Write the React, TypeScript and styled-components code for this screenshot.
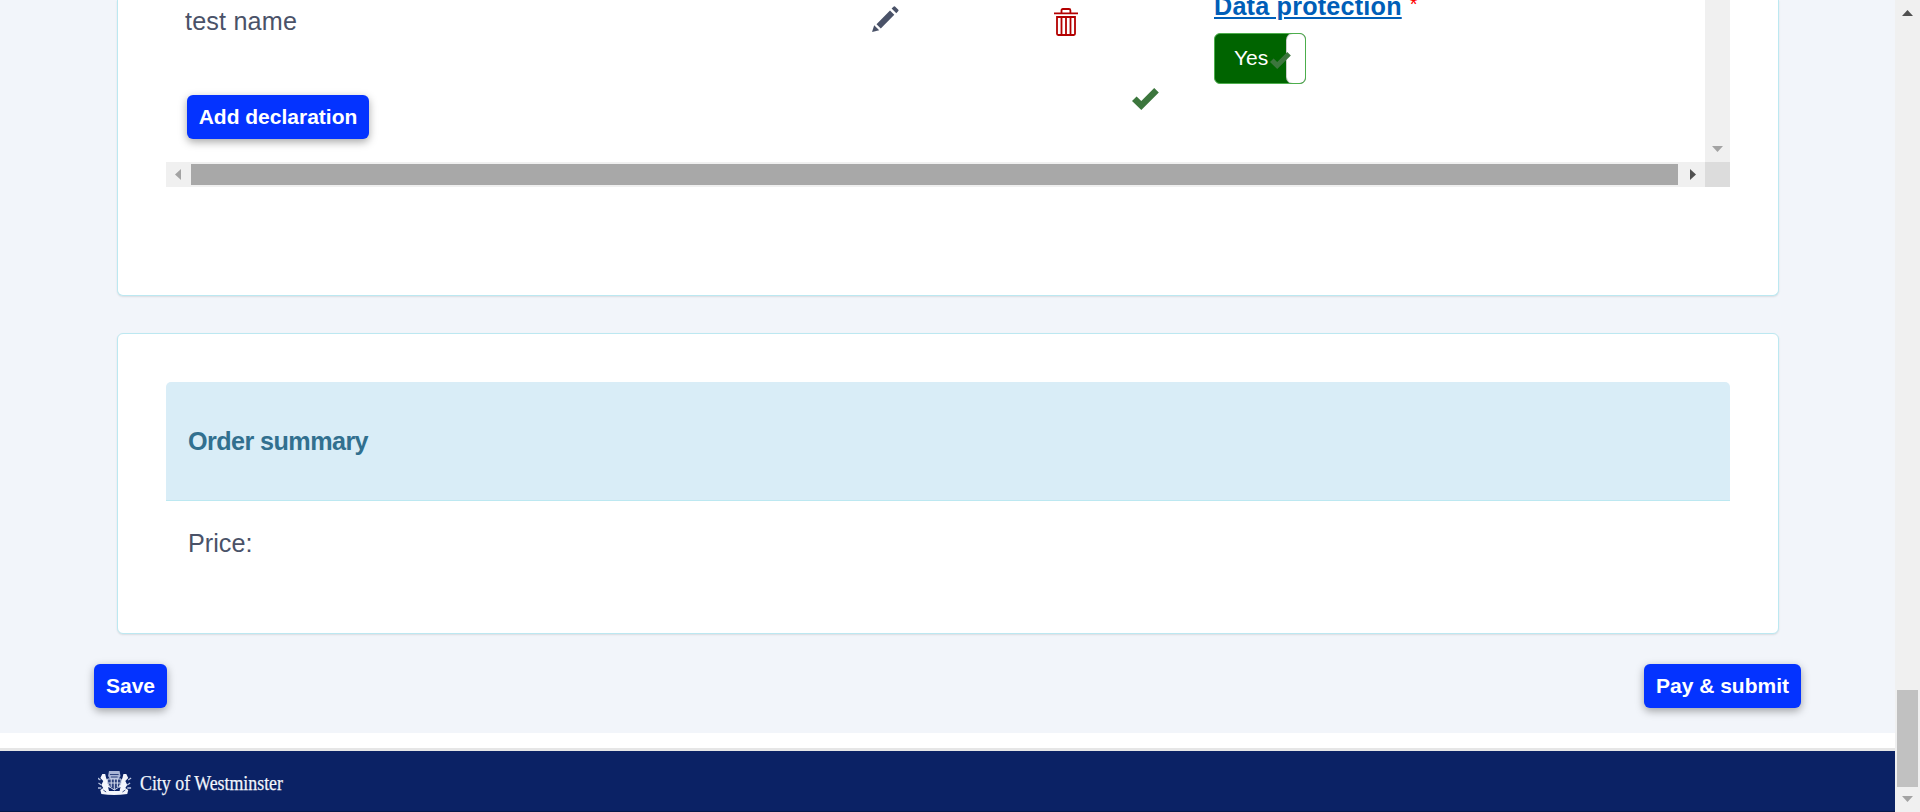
import React from "react";
import styled, { createGlobalStyle } from "styled-components";

const GlobalStyle = createGlobalStyle`
  * { box-sizing: border-box; }
  body {
    margin: 0;
    overflow: hidden;
    background: #fff;
    font-family: "Liberation Sans", Arial, sans-serif;
    font-size: 25.2px;
    color: #4a5268;
  }
  svg { display: block; flex: none; }
`;

const Window = styled.div`
  display: flex;
  height: 812px;
  overflow: hidden;
`;

const Page = styled.div`
  flex: 1;
  min-width: 0;
  display: flex;
  flex-direction: column;
`;

const Main = styled.main`
  height: 733px;
  padding: 0 94px 0 94px;
  background: #f2f5fa;
`;

const Card = styled.section<{ $height: number; $cut?: boolean }>`
  height: ${(p) => p.$height}px;
  margin: 0 22px 37px 23px;
  padding: ${(p) => (p.$cut ? 0 : 48)}px 48px 0;
  background: #fff;
  border: 1px solid #bce8f1;
  border-top-width: ${(p) => (p.$cut ? 0 : 1)}px;
  border-radius: ${(p) => (p.$cut ? "0 0 6px 6px" : "6px")};
  box-shadow: 0 1px 2px rgba(0, 0, 0, 0.1);
`;

const ScrollFrame = styled.div`
  display: grid;
  grid-template-columns: 1539px 25px;
  grid-template-rows: 162px 25px;
`;

const Declarations = styled.div`
  display: grid;
  grid-template-columns: 706px 182px 78px 82px 1fr;
  align-items: start;
  overflow: hidden;
`;

const Cell = styled.div<{ $top: number; $left?: number }>`
  padding: ${(p) => p.$top}px 0 0 ${(p) => p.$left ?? 0}px;
`;

const Name = styled.div`
  height: 88px;
  line-height: 28px;
  margin-left: -2px;
  letter-spacing: 0.17px;
`;

const Button = styled.button<{ $width: number }>`
  width: ${(p) => p.$width}px;
  height: 44px;
  padding: 0 0 1px;
  border: 0;
  border-radius: 6px;
  background: #0433ff;
  color: #fff;
  font: bold 21px "Liberation Sans", Arial, sans-serif;
  white-space: nowrap;
  box-shadow: 0 3px 8px rgba(0, 0, 0, 0.35);
`;

const Label = styled.div`
  display: flex;
  gap: 8px;
  height: 44px;
  margin-top: -11px;
  line-height: 34px;
  font-weight: bold;
  font-size: 25.2px;
`;

const HelpLink = styled.a`
  color: #005eb8;
  letter-spacing: 0.2px;
  text-decoration: underline;
  text-decoration-thickness: 2px;
  text-underline-offset: 2px;
`;

const Required = styled.span`
  color: #f00;
  font-size: 20px;
  font-weight: normal;
  line-height: 31px;
`;

const Toggle = styled.div`
  position: relative;
  display: flex;
  justify-content: space-between;
  width: 92px;
  height: 51px;
  border: 1px solid #4cae4c;
  border-radius: 6px;
  background: #006400;
  overflow: hidden;
`;

const ToggleText = styled.span`
  padding-left: 19px;
  color: #fff;
  font-size: 21px;
  line-height: 48px;
`;

const Knob = styled.span`
  width: 18px;
  border-radius: 6px;
  background: #fff;
  box-shadow: 0 0 0 1px #ccc;
`;

const ToggleMark = styled.span`
  position: absolute;
  left: 55px;
  top: 18px;
`;

const VTrack = styled.div`
  display: flex;
  flex-direction: column;
  align-items: center;
  background: #f0f0f0;
`;

const HTrack = styled.div`
  display: flex;
  align-items: center;
  background: #f0f0f0;
`;

const Corner = styled.div`
  background: #dcdcdc;
`;

const Arrow = styled.svg<{ $space: string }>`
  margin: ${(p) => p.$space};
`;

const HThumb = styled.div`
  width: 1487px;
  height: 21px;
  background: #a8a8a8;
`;

const WindowTrack = styled(VTrack)`
  flex: none;
  width: 25px;
  height: 812px;
`;

const WindowThumb = styled.div`
  width: 21px;
  height: 97px;
  margin-top: auto;
  background: #c1c1c1;
`;

const SummaryTitle = styled.h2`
  height: 119px;
  margin: 0;
  padding: 0 0 1px 22px;
  border-bottom: 1px solid #bce8f1;
  border-radius: 5px 5px 0 0;
  background: #d9edf7;
  color: #31708f;
  font-size: 25.2px;
  line-height: 118px;
  letter-spacing: -0.58px;
`;

const Price = styled.div`
  padding: 28px 22px 0;
  line-height: 29px;
`;

const Actions = styled.div`
  display: flex;
  justify-content: space-between;
  margin-top: -7px;
`;

const Footer = styled.footer`
  height: 64px;
  margin-top: 15px;
  padding: 15px 98px 0;
  border-top: 3px solid #e6e6e6;
  border-bottom: 1px solid #061a4a;
  background: #0b2265;
`;

const Pencil = () => (
  <svg width="27" height="26" viewBox="0 0 27 26" fill="#4a5268">
    <path d="M4.5 18.2 18 4.5 22.3 8.7 8.8 22.4ZM19.6 2.6 21.8.4Q22.4-.1 23 .4L26.3 3.8Q26.8 4.4 26.3 5L24.3 7.2ZM0 26 2.2 19.2 7.2 24.2Z" />
  </svg>
);

const Trash = () => (
  <svg width="24" height="28" viewBox="0 0 24 28" fill="none" stroke="#b30000" strokeWidth="1.8">
    <path d="M0 5.4H24M7.5 5V2.4Q7.5 1 8.9 1H15Q16.4 1 16.4 2.4V5M3 9H21V25.8Q21 27 19.8 27H4.2Q3 27 3 25.8ZM7.5 9V27M12 9V27M16.5 9V27" />
  </svg>
);

const Check = ({ width, height, fill }: { width: number; height: number; fill: string }) => (
  <svg width={width} height={height} viewBox="0 0 27 22" fill={fill} preserveAspectRatio="none">
    <path d="M0 13 4.6 8.5 9.3 13 22.2 0 26.8 4.6 9.3 22Z" />
  </svg>
);

const Crest = () => (
  <g fill="none" stroke="#eef2fb" strokeWidth="1.4">
    <path
      fill="#f4f6fc"
      stroke="none"
      d="M3 8 5 4 8 4 9 8 12 14 13 18 11 17 12 21H23L24 17 22 18 23 14 26 8 27 4 30 4 32 8 29 11 31 15 29 18 32 20 31 24Q17 26 4 24L3 20 6 18 4 15 6 11Z"
    />
    <path fill="#a9b5d6" stroke="none" d="M12 1H23L24 6 22 9H13L11 6Z" />
    <path d="M0 8 3 10M35 8 32 10M1 13 4 15M34 13 31 15M0 18H4M31 18H35" stroke="#b9c4e0" />
    <path d="M10.5 9H24.5V13Q23 18 17.5 20Q12 18 10.5 13Z" fill="#2a3f7c" stroke="#cfd7eb" strokeWidth="1" />
    <path d="M17.5 9V20M11 13H24M14.3 9V17M20.7 9V17" stroke="#d6ddef" strokeWidth="1" />
    <path d="M13 4.5H22M14 7H21M6 20 9 22M29 20 26 22" stroke="#0b2265" strokeWidth=".8" />
  </g>
);

const Brand = () => (
  <svg width="260" height="40" viewBox="0 0 260 40">
    <g transform="translate(-.5 4) scale(.96 1)">
      <Crest />
    </g>
    <text
      x="42"
      y="24"
      fill="#f2f5fc"
      stroke="#f2f5fc"
      strokeWidth=".25"
      fontFamily="Liberation Serif, Times New Roman, serif"
      fontSize="21.5"
      textLength="143"
      lengthAdjust="spacingAndGlyphs"
    >
      City of Westminster
    </text>
  </svg>
);

const arrows = {
  left: { w: 6, h: 11, d: "M6 0V11L0 5.5Z" },
  right: { w: 6, h: 11, d: "M0 0V11L6 5.5Z" },
  up: { w: 11, h: 6, d: "M0 6H11L5.5 0Z" },
  down: { w: 11, h: 6, d: "M0 0H11L5.5 6Z" },
};

const ScrollArrow = ({ dir, space, dim }: { dir: keyof typeof arrows; space: string; dim?: boolean }) => (
  <Arrow $space={space} width={arrows[dir].w} height={arrows[dir].h} fill={dim ? "#a3a3a3" : "#505050"}>
    <path d={arrows[dir].d} />
  </Arrow>
);

export default function App() {
  return (
    <Window>
      <GlobalStyle />
      <Page>
        <Main>
          <Card $height={296} $cut>
            <ScrollFrame>
              <Declarations>
                <Cell $top={7} $left={21}>
                  <Name>test name</Name>
                  <Button $width={182}>Add declaration</Button>
                </Cell>
                <Cell $top={6}>
                  <Pencil />
                </Cell>
                <Cell $top={8}>
                  <Trash />
                </Cell>
                <Cell $top={88}>
                  <Check width={27} height={22} fill="#3c763d" />
                </Cell>
                <Cell $top={0}>
                  <Label>
                    <HelpLink>Data protection</HelpLink>
                    <Required>*</Required>
                  </Label>
                  <Toggle>
                    <ToggleText>Yes</ToggleText>
                    <Knob />
                    <ToggleMark>
                      <Check width={21} height={17} fill="#3c763d" />
                    </ToggleMark>
                  </Toggle>
                </Cell>
              </Declarations>
              <VTrack>
                <ScrollArrow dir="down" space="auto 0 10px" dim />
              </VTrack>
              <HTrack>
                <ScrollArrow dir="left" space="0 10px 0 9px" dim />
                <HThumb />
                <ScrollArrow dir="right" space="0 0 0 12px" />
              </HTrack>
              <Corner />
            </ScrollFrame>
          </Card>
          <Card $height={301}>
            <SummaryTitle>Order summary</SummaryTitle>
            <Price>Price:</Price>
          </Card>
          <Actions>
            <Button $width={73}>Save</Button>
            <Button $width={157}>Pay &amp; submit</Button>
          </Actions>
        </Main>
        <Footer>
          <Brand />
        </Footer>
      </Page>
      <WindowTrack>
        <ScrollArrow dir="up" space="10px 0 0" />
        <WindowThumb />
        <ScrollArrow dir="down" space="9px 0 10px" dim />
      </WindowTrack>
    </Window>
  );
}
